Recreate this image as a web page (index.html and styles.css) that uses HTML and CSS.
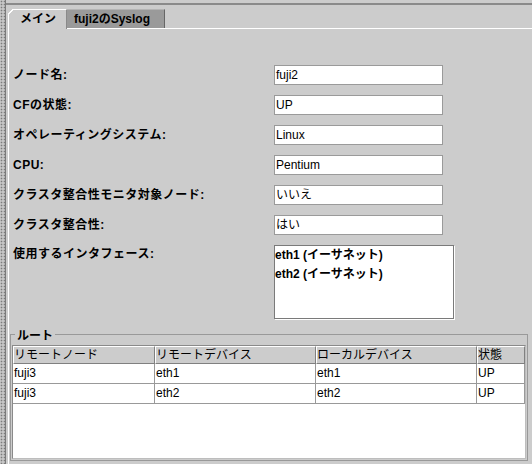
FILE: index.html
```html
<!DOCTYPE html>
<html lang="ja">
<head>
<meta charset="utf-8">
<title>fuji2</title>
<link rel="stylesheet" href="styles.css">
</head>
<body>
<div class="window">
  <div class="grip"></div>
  <div class="main">
    <div class="topline"></div>
    <div class="tabs">
      <div class="tab tab-active">メイン</div>
      <div class="tab tab-inactive">fuji2のSyslog</div>
    </div>
    <div class="panel">
      <div class="form">
        <div class="label">ノード名:</div><div class="field">fuji2</div>
        <div class="label">CFの状態:</div><div class="field">UP</div>
        <div class="label">オペレーティングシステム:</div><div class="field">Linux</div>
        <div class="label">CPU:</div><div class="field">Pentium</div>
        <div class="label">クラスタ整合性モニタ対象ノード:</div><div class="field">いいえ</div>
        <div class="label">クラスタ整合性:</div><div class="field">はい</div>
        <div class="label label-top">使用するインタフェース:</div>
        <div class="list">
          <div class="list-item">eth1 (イーサネット)</div>
          <div class="list-item">eth2 (イーサネット)</div>
        </div>
      </div>
      <fieldset class="group">
        <legend class="group-title">ルート</legend>
        <div class="scroll">
          <table class="grid">
            <thead>
              <tr><th class="c1">リモートノード</th><th class="c2">リモートデバイス</th><th class="c3">ローカルデバイス</th><th class="c4">状態</th></tr>
            </thead>
            <tbody>
              <tr><td>fuji3</td><td>eth1</td><td>eth1</td><td>UP</td></tr>
              <tr><td>fuji3</td><td>eth2</td><td>eth2</td><td>UP</td></tr>
            </tbody>
          </table>
        </div>
      </fieldset>
    </div>
  </div>
</div>
</body>
</html>
```
FILE: styles.css
```css
body {
  margin: 0;
  font-family: "Liberation Sans", "Noto Sans CJK JP", sans-serif;
  font-size: 12px;
  color: #000;
}

.window {
  width: 532px;
  height: 464px;
  display: flex;
  background: #cccccc;
  overflow: hidden;
}

.grip {
  flex: none;
  width: 5px;
  background-color: #c6c6c6;
  background-image: radial-gradient(circle, #7c7c7c 0.7px, transparent 1.1px);
  background-size: 3px 3px;
  border-right: 1px solid #7a7a7a;
}

.main {
  flex: 1;
  min-width: 0;
  display: flex;
  flex-direction: column;
}

.topline {
  height: 2px;
  margin-top: 3px;
  background: #8a8a8a;
}

.tabs {
  position: relative;
  z-index: 1;
  display: flex;
  align-items: flex-start;
  height: 19px;
  margin-top: 4px;
  padding-left: 2px;
}

.tab {
  box-sizing: border-box;
  font-weight: bold;
  white-space: nowrap;
  line-height: 18px;
}

.tab-active {
  position: relative;
  width: 59px;
  height: 20px;
  margin-bottom: -1px;
  padding-left: 11px;
  background: #cccccc;
  border-left: 1px solid #ffffff;
  border-top: 1px solid #ffffff;
  border-right: 1px solid #8a8a8a;
}

.tab-active::before {
  content: "";
  position: absolute;
  left: -1px;
  top: -1px;
  width: 6px;
  height: 6px;
  background: linear-gradient(135deg, #cccccc 0, #cccccc calc(50% - 0.8px), #ffffff calc(50% - 0.8px), #ffffff calc(50% + 0.6px), transparent calc(50% + 0.6px));
}

.tab-inactive {
  width: 98px;
  height: 19px;
  padding-left: 7px;
  background: #9a9a9a;
  border-top: 1px solid #b4b4b4;
  border-right: 1px solid #666666;
}

.panel {
  flex: 1;
  margin-left: 2px;
  padding-top: 36px;
  border-top: 1px solid #ffffff;
  border-left: 1px solid #ffffff;
}

.form {
  display: grid;
  grid-template-columns: 261px auto;
  grid-template-rows: repeat(6, 20px) 74px;
  row-gap: 10px;
  justify-items: start;
  margin-left: 4px;
}

.label {
  font-weight: bold;
  line-height: 20px;
  letter-spacing: 0.5px;
  white-space: nowrap;
}

.label-top {
  line-height: 19px;
  align-self: start;
}

.field {
  box-sizing: border-box;
  width: 169px;
  height: 20px;
  padding-left: 1px;
  line-height: 18px;
  background: #ffffff;
  border: 1px solid #9a9a9a;
}

.list {
  box-sizing: border-box;
  width: 180px;
  height: 74px;
  background: #ffffff;
  border: 1px solid #7a7a7a;
  box-shadow: 1px 1px 0 #ffffff;
  font-weight: bold;
  line-height: 19px;
}

.group {
  min-width: 0;
  margin: 6px 4px 0 1px;
  padding: 2px 1px 1px 1px;
  border: 1px solid #999999;
}

.group-title {
  margin-left: 3px;
  padding: 4px 2px 0 2px;
  font-weight: bold;
  line-height: 14px;
}

.scroll {
  box-sizing: border-box;
  height: 114px;
  background: #ffffff;
  border-top: 1px solid #8a8a8a;
  border-left: 1px solid #8a8a8a;
  border-right: 1px solid #bdbdbd;
  border-bottom: 1px solid #bdbdbd;
}

.grid {
  table-layout: fixed;
  width: 512px;
  border-collapse: separate;
  border-spacing: 0;
  font-size: 12px;
}

.grid th {
  box-sizing: border-box;
  height: 18px;
  padding: 0;
  font-weight: normal;
  text-align: left;
  line-height: 16px;
  white-space: nowrap;
  overflow: hidden;
  background: #cccccc;
  border-top: 1px solid #ffffff;
  border-left: 1px solid #ffffff;
  border-right: 1px solid #808080;
  border-bottom: 1px solid #808080;
}

.grid .c1 { width: 142px; }
.grid .c2 { width: 161px; }
.grid .c3 { width: 161px; }
.grid .c4 { width: 48px; }

.grid td {
  box-sizing: border-box;
  height: 20px;
  padding: 0 0 0 1px;
  line-height: 19px;
  white-space: nowrap;
  border-right: 1px solid #999999;
  border-bottom: 1px solid #999999;
}
```
